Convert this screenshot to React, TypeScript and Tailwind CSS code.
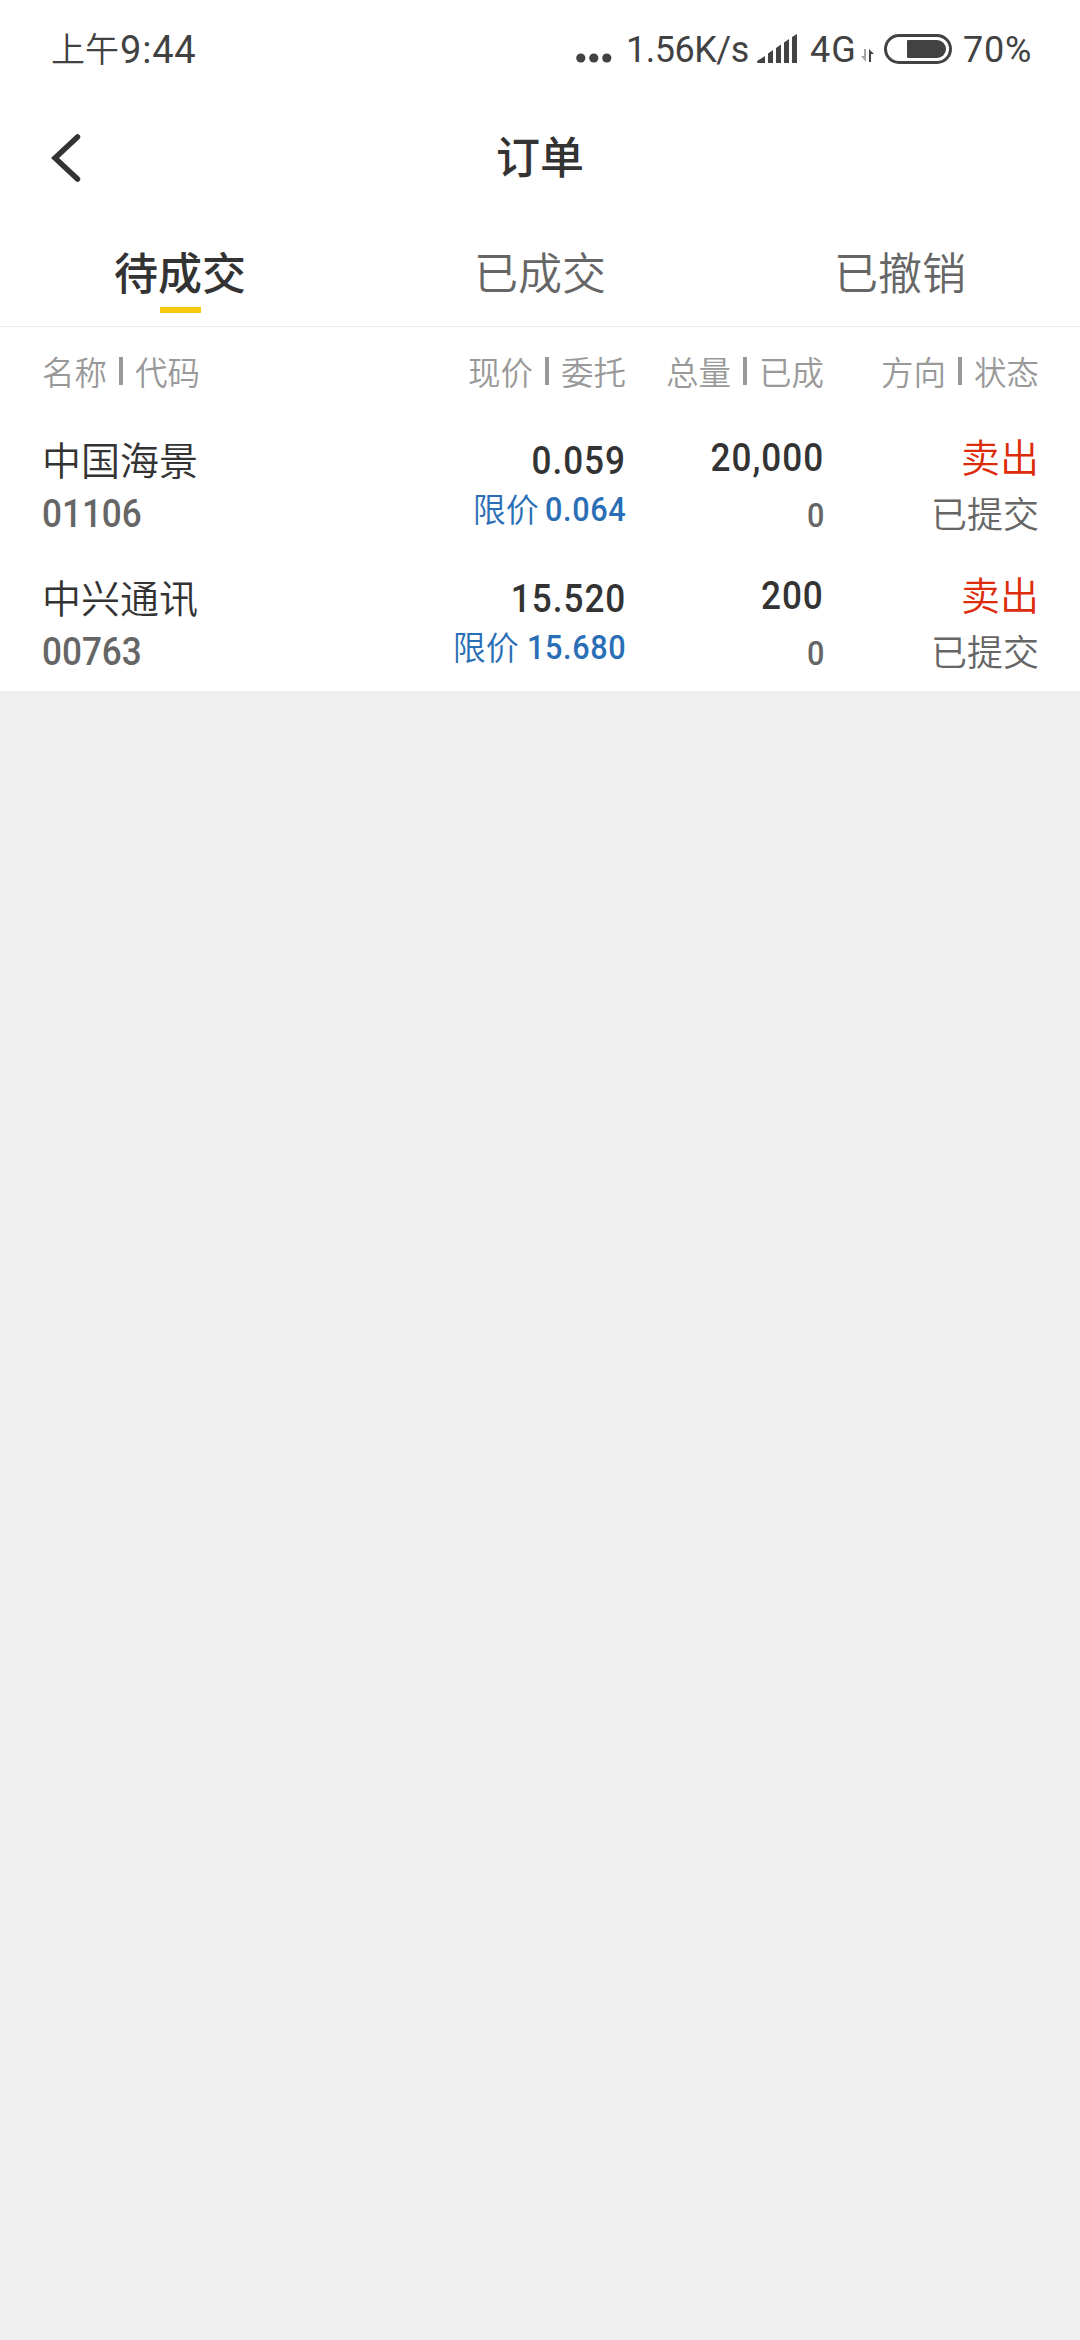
import type { ReactNode } from "react";

type Order = {
    name: string;
    code: string;
    price: string;
    limit: string;
    total: string;
    filled: string;
    side: string;
    status: string;
};

const TABS = ["待成交", "已成交", "已撤销"];

const ORDERS: Order[] = [
    { name: "中国海景", code: "01106", price: "0.059", limit: "0.064", total: "20,000", filled: "0", side: "卖出", status: "已提交" },
    { name: "中兴通讯", code: "00763", price: "15.520", limit: "15.680", total: "200", filled: "0", side: "卖出", status: "已提交" },
];

// condensed digits used for prices, codes and amounts
function Num({ children, className }: { children: ReactNode; className: string }) {
    return (
        <span className={`inline-block scale-x-[.9] font-['Roboto',sans-serif] font-medium ${className}`}>
            {children}
        </span>
    );
}

function StatusBar() {
    return (
        <div className="flex h-[100px] items-center justify-between pl-[51px] pr-[43px] font-['Roboto','Noto_Sans_CJK_SC',sans-serif] font-normal text-[#424242]">
            <div className="flex items-center whitespace-nowrap leading-none">
                <span className="text-[34px] font-[350]">上午</span>
                <span className="ml-px text-[38px] tracking-[0.8px]">9:44</span>
            </div>
            <div className="flex items-center whitespace-nowrap text-[36px] leading-none">
                <svg className="mt-[15px]" width="36" height="10" viewBox="0 0 36 10" fill="currentColor">
                    <circle cx="4.8" cy="5" r="4.6" />
                    <circle cx="17.8" cy="5" r="4.6" />
                    <circle cx="30.8" cy="5" r="4.6" />
                </svg>
                <span className="ml-[14px] w-[122px] tracking-[-0.5px]">1.56K/s</span>
                <svg className="ml-[9px] -mt-[4px]" width="40" height="29" viewBox="0 0 40 29" fill="currentColor">
                    <path d="M0 27L8 22V29H1Q0 29 0 27Z" />
                    <path d="M11 19.5L16 16V29H11Z" />
                    <path d="M19 14L24 10.5V29H19Z" />
                    <path d="M27 8.5L32 5V29H27Z" />
                    <path d="M35 3L40 0V29H35Z" />
                </svg>
                <span className="ml-[13px] w-[49px] tracking-[1px]">4G</span>
                <svg className="ml-[2px] mt-[11px]" width="14" height="13" viewBox="0 0 14 13">
                    <path d="M5 0V13L0 7H3V0Z" fill="#a5a5a5" />
                    <path d="M8 13V0L13 5H10V13Z" fill="#424242" />
                </svg>
                <svg className="ml-[9px] -mt-[3px]" width="68" height="30" viewBox="0 0 68 30">
                    <rect x="1.5" y="1.5" width="65" height="27" rx="13.5" fill="none" stroke="#424242" strokeWidth="3" />
                    <path d="M24 6H53A9 9 0 0 1 53 24H24Q23 24 23 23V7Q23 6 24 6Z" fill="#424242" />
                </svg>
                <span className="ml-[11px] w-[74px] tracking-[0.8px]">70%</span>
            </div>
        </div>
    );
}

function TitleBar() {
    return (
        <div className="grid h-[116px] grid-cols-3 items-center">
            <svg className="ml-[50px]" width="32" height="50" viewBox="0 0 32 50" fill="none" stroke="#333" strokeWidth="5.5" strokeLinecap="round">
                <path d="M27.5 4L5 25L27.5 46" />
            </svg>
            <h1 className="pb-[6px] text-center text-[44px] font-medium leading-none">订单</h1>
        </div>
    );
}

function HeadCell({ left, right }: { left: string; right: string }) {
    return (
        <div className="flex items-center justify-end gap-[12px] first:justify-start">
            <span>{left}</span>
            <i className="h-[28px] w-[4px] bg-[#999]" />
            <span>{right}</span>
        </div>
    );
}

function OrderRow({ order }: { order: Order }) {
    return (
        <div className="grid h-[138px] grid-cols-[314px_270px_198px_215px] whitespace-nowrap pl-[42px] text-[39px] leading-none">
            <div className="pt-[20px]">
                <div className="flex h-[50px] items-center pb-[4px]">{order.name}</div>
                <div className="flex h-[56px] items-center pt-[2px] text-[#666]">
                    <Num className="origin-left">{order.code}</Num>
                </div>
            </div>
            <div className="pt-[20px]">
                <div className="flex h-[50px] items-center justify-end pt-[2px]">
                    <Num className="origin-right tracking-[1.1px]">{order.price}</Num>
                </div>
                <div className="flex h-[48px] items-center justify-end text-[33px] text-[#2a6eb6]">
                    <span className="-mr-[3px] pb-[2px]">限价</span>
                    <Num className="origin-right text-[34px] tracking-[0.7px]">{order.limit}</Num>
                </div>
            </div>
            <div className="pt-[17px]">
                <div className="flex h-[50px] items-center justify-end pt-[2px]">
                    <Num className="origin-right tracking-[1.1px]">{order.total}</Num>
                </div>
                <div className="flex h-[66px] items-center justify-end text-[#666]">
                    <Num className="origin-right text-[34px]">{order.filled}</Num>
                </div>
            </div>
            <div className="pt-[17px]">
                <div className="flex h-[50px] items-center justify-end pb-[4px] text-[#dc2c0c]">{order.side}</div>
                <div className="flex h-[64px] items-center justify-end pb-[4px] text-[36px] text-[#666]">{order.status}</div>
            </div>
        </div>
    );
}

export default function App() {
    return (
        <main className="min-h-screen w-[1080px] bg-[#efefef] font-['Noto_Sans_CJK_SC',sans-serif] font-[350] text-[#333]">
            <div className="bg-white">
                <StatusBar />
                <TitleBar />
                <div className="grid h-[111px] grid-cols-3 border-b border-[#ebebeb] text-[44px] leading-none">
                    {TABS.map((tab, i) => (
                        <div key={tab} className={`flex flex-col items-center pt-[33px] ${i === 0 ? "font-medium" : "text-[#666]"}`}>
                            {tab}
                            {i === 0 && <div className="mt-[14px] h-[6px] w-[41px] bg-[#f7ca0d]" />}
                        </div>
                    ))}
                </div>
                <div className="grid h-[88px] grid-cols-[314px_270px_198px_215px] whitespace-nowrap pl-[42px] text-[32.5px] leading-none text-[#999]">
                    <HeadCell left="名称" right="代码" />
                    <HeadCell left="现价" right="委托" />
                    <HeadCell left="总量" right="已成" />
                    <HeadCell left="方向" right="状态" />
                </div>
                {ORDERS.map((order) => (
                    <OrderRow key={order.code} order={order} />
                ))}
            </div>
        </main>
    );
}
